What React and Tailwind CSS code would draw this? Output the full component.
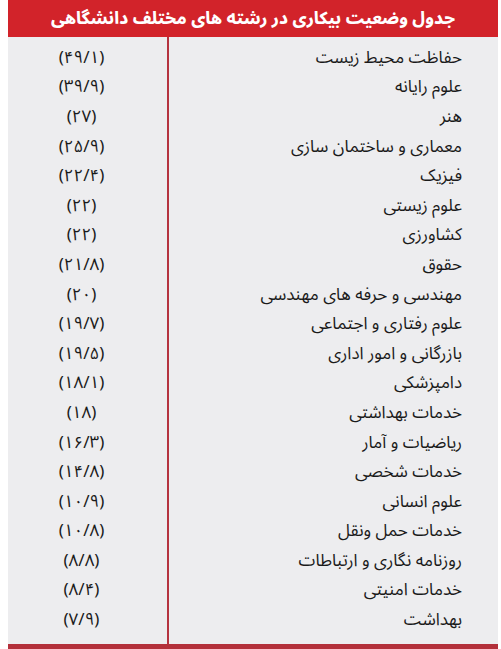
import React from "react";

const rows = [
  ["حفاظت محیط زیست", "(۴۹/۱)"],
  ["علوم رایانه", "(۳۹/۹)"],
  ["هنر", "(۲۷)"],
  ["معماری و ساختمان سازی", "(۲۵/۹)"],
  ["فیزیک", "(۲۲/۴)"],
  ["علوم زیستی", "(۲۲)"],
  ["کشاورزی", "(۲۲)"],
  ["حقوق", "(۲۱/۸)"],
  ["مهندسی و حرفه های مهندسی", "(۲۰)"],
  ["علوم رفتاری و اجتماعی", "(۱۹/۷)"],
  ["بازرگانی و امور اداری", "(۱۹/۵)"],
  ["دامپزشکی", "(۱۸/۱)"],
  ["خدمات بهداشتی", "(۱۸)"],
  ["ریاضیات و آمار", "(۱۶/۳)"],
  ["خدمات شخصی", "(۱۴/۸)"],
  ["علوم انسانی", "(۱۰/۹)"],
  ["خدمات حمل ونقل", "(۱۰/۸)"],
  ["روزنامه نگاری و ارتباطات", "(۸/۸)"],
  ["خدمات امنیتی", "(۸/۴)"],
  ["بهداشت", "(۷/۹)"],
];

export default function App() {
  return (
    <div className="w-[501px] h-[649px] bg-white pl-[8px] pr-[3px] font-['Noto_Sans_Arabic','DejaVu_Sans',sans-serif]">
      <div className="flex flex-col h-full w-[490px]">
        <div
          dir="rtl"
          className="h-[37px] bg-[#d2232a] text-white font-extrabold text-[17px] tracking-[-0.5px] flex items-center justify-center leading-[24px] whitespace-nowrap"
        >
          جدول وضعیت بیکاری در رشته های مختلف دانشگاهی
        </div>
        <div className="flex-1 flex bg-[#ededef] text-[#1a1a1a]">
          <div className="w-[161px] border-r-2 border-[#b5333f] pt-[6px] pr-[12px]">
            {rows.map(([, v], i) => (
              <div key={i} dir="ltr" className="h-[29.6px] flex items-center justify-center text-[17px] leading-[22px]">
                <span dir="ltr">{v}</span>
              </div>
            ))}
          </div>
          <div className="flex-1 pt-[6px] pr-[36px]" dir="rtl">
            {rows.map(([n], i) => (
              <div key={i} className="h-[29.6px] flex items-center text-[17px] leading-[22px]">
                {n}
              </div>
            ))}
          </div>
        </div>
        <div className="h-[5px] bg-[#b3303a]" />
      </div>
    </div>
  );
}
